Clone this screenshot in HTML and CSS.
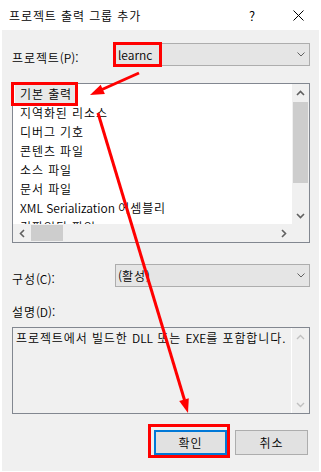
FILE: index.html
```html
<!DOCTYPE html>
<html lang="ko">
<head>
<meta charset="utf-8">
<title>프로젝트 출력 그룹 추가</title>
<link rel="stylesheet" href="styles.css">
</head>
<body>
<div class="window">
  <div class="titlebar">
    <span class="title">프로젝트 출력 그룹 추가</span>
    <span class="cap-btn lat">?</span>
    <span class="cap-btn"><svg width="11" height="11" viewBox="0 0 11 11"><path d="M0.5 0.5 L10.5 10.5 M10.5 0.5 L0.5 10.5" stroke="#000" stroke-width="1" fill="none"/></svg></span>
  </div>
  <div class="client">
    <div class="field-row">
      <span class="field-label">프로젝트<span class="lat">(P):</span></span>
      <div class="combo">
        <span class="combo-text lat">learnc</span>
        <svg class="chev" width="8" height="5" viewBox="0 0 8 5"><path d="M0.5 0.5 L4 4 L7.5 0.5" stroke="#606060" fill="none"/></svg>
      </div>
    </div>

    <div class="listbox">
      <div class="list-main">
        <div class="items">
          <div class="item selected">기본 출력</div>
          <div class="item">지역화된 리소스</div>
          <div class="item">디버그 기호</div>
          <div class="item">콘텐츠 파일</div>
          <div class="item">소스 파일</div>
          <div class="item">문서 파일</div>
          <div class="item"><span class="lat">XML Serialization </span>어셈블리</div>
          <div class="item">컴파일된 파일</div>
        </div>
        <div class="vscroll">
          <div class="sb-btn"><svg width="9" height="6" viewBox="0 0 9 6"><path d="M1 5 L4.5 1.5 L8 5" stroke="#606060" stroke-width="1.6" fill="none"/></svg></div>
          <div class="thumb-v"></div>
          <div class="sb-fill"></div>
          <div class="sb-btn"><svg width="9" height="6" viewBox="0 0 9 6"><path d="M1 1 L4.5 4.5 L8 1" stroke="#606060" stroke-width="1.6" fill="none"/></svg></div>
        </div>
      </div>
      <div class="hscroll">
        <div class="sb-btn-h"><svg width="6" height="9" viewBox="0 0 6 9"><path d="M5 1 L1.5 4.5 L5 8" stroke="#606060" stroke-width="1.6" fill="none"/></svg></div>
        <div class="thumb-h"></div>
        <div class="sb-fill"></div>
        <div class="sb-btn-h"><svg width="6" height="9" viewBox="0 0 6 9"><path d="M1 1 L4.5 4.5 L1 8" stroke="#606060" stroke-width="1.6" fill="none"/></svg></div>
        <div class="corner"></div>
      </div>
    </div>

    <div class="field-row row-config">
      <span class="field-label">구성<span class="lat">(C):</span></span>
      <div class="combo">
        <span class="combo-text"><span class="lat">(</span>활성<span class="lat">)</span></span>
        <svg class="chev" width="8" height="5" viewBox="0 0 8 5"><path d="M0.5 0.5 L4 4 L7.5 0.5" stroke="#606060" fill="none"/></svg>
      </div>
    </div>

    <div class="desc-label">설명<span class="lat">(D):</span></div>
    <div class="desc">
      <div class="desc-text">프로젝트에서 빌드한 <span class="lat">DLL</span> 또는 <span class="lat">EXE</span>를 포함합니다.</div>
      <div class="desc-scroll">
        <div class="sb-btn"><svg width="9" height="6" viewBox="0 0 9 6"><path d="M1 5 L4.5 1.5 L8 5" stroke="#c0c0c0" stroke-width="1.4" fill="none"/></svg></div>
        <div class="sb-fill"></div>
        <div class="sb-btn"><svg width="9" height="6" viewBox="0 0 9 6"><path d="M1 1 L4.5 4.5 L8 1" stroke="#c0c0c0" stroke-width="1.4" fill="none"/></svg></div>
      </div>
    </div>

    <div class="buttons">
      <div class="btn default">확인</div>
      <div class="btn">취소</div>
    </div>
  </div>

  <svg class="annotations" width="321" height="472" viewBox="0 0 321 472">
    <g fill="none" stroke="#ff0000" stroke-width="3">
      <rect x="114.5" y="43.5" width="46" height="22"/>
      <rect x="12.5" y="83.5" width="64" height="21"/>
      <rect x="149.5" y="425.5" width="79" height="31"/>
      <line x1="139" y1="73" x2="102" y2="89.5"/>
      <line x1="98" y1="113" x2="184.5" y2="400"/>
    </g>
    <g fill="#ff0000">
      <polygon points="90,95 100.7,84.7 104.9,93.9"/>
      <polygon points="188,413 179.2,401 188.8,398.2"/>
    </g>
  </svg>
</div>
</body>
</html>
```

FILE: styles.css
```css
* {
  box-sizing: border-box;
}

body {
  margin: 0;
  background: #ffffff;
  font-family: "Noto Sans CJK KR", "Noto Sans", sans-serif;
  font-size: 12px;
  font-weight: 350;
  letter-spacing: 0.9px;
  color: #000000;
}

.lat {
  letter-spacing: 0;
}

.window {
  position: relative;
  width: 321px;
  height: 472px;
  background: #ffffff;
  display: flex;
  flex-direction: column;
  overflow: hidden;
}

.titlebar {
  flex: none;
  height: 30px;
  display: flex;
  align-items: center;
  padding-left: 9px;
}

.title {
  flex: 1;
  line-height: 17px;
}

.cap-btn {
  width: 46px;
  height: 30px;
  display: flex;
  align-items: center;
  justify-content: center;
  font-size: 13px;
}

.client {
  flex: 1;
  margin: 0 2px 1px 2px;
  background: #f0f0f0;
  padding: 13px 9px 0 10px;
  display: flex;
  flex-direction: column;
}

.field-row {
  display: flex;
  height: 23px;
  flex: none;
}

.row-config {
  margin-top: 21px;
}

.field-label {
  width: 103px;
  padding-top: 6px;
  line-height: 17px;
  white-space: nowrap;
}

.combo {
  flex: 1;
  display: flex;
  align-items: center;
  border: 1px solid #adadad;
  background: #e5e5e5;
  padding: 0 4px 0 2px;
}

.combo-text {
  flex: 1;
  line-height: 17px;
}

.chev {
  display: block;
}

.listbox {
  margin-top: 17px;
  height: 160px;
  flex: none;
  border: 1px solid #828790;
  background: #ffffff;
  display: flex;
  flex-direction: column;
}

.list-main {
  display: flex;
  height: 140px;
}

.items {
  flex: 1;
  overflow: hidden;
  padding-left: 2px;
}

.item {
  height: 19px;
  line-height: 19px;
  padding: 0 5px;
  white-space: nowrap;
}

.item.selected {
  width: fit-content;
  padding-right: 3px;
  background: #e8e8e8;
}

.vscroll {
  width: 17px;
  background: #f0f0f0;
  display: flex;
  flex-direction: column;
}

.sb-btn {
  height: 17px;
  flex: none;
  display: flex;
  align-items: center;
  justify-content: center;
}

.sb-fill {
  flex: 1;
}

.thumb-v {
  flex: none;
  height: 81px;
  margin: 1px 1px 0 1px;
  background: #cdcdcd;
}

.hscroll {
  flex: 1;
  display: flex;
  background: #f0f0f0;
}

.sb-btn-h {
  width: 17px;
  flex: none;
  display: flex;
  align-items: center;
  justify-content: center;
}

.thumb-h {
  width: 32px;
  margin: 1px 0 1px 1px;
  background: #cdcdcd;
}

.corner {
  width: 17px;
  background: #f0f0f0;
}

.desc-label {
  margin-top: 16px;
  line-height: 17px;
}

.desc {
  margin-top: 7px;
  height: 87px;
  flex: none;
  border: 1px solid #828790;
  background: #f0f0f0;
  display: flex;
}

.desc-text {
  flex: 1;
  padding: 1px 0 0 3px;
  line-height: 17px;
  white-space: nowrap;
  overflow: hidden;
}

.desc-scroll {
  width: 18px;
  border-left: 1px solid #ffffff;
  display: flex;
  flex-direction: column;
}

.buttons {
  margin-top: 16px;
  display: flex;
  justify-content: flex-end;
  gap: 8px;
  padding-right: 2px;
}

.btn {
  width: 73px;
  height: 25px;
  border: 1px solid #adadad;
  background: #e1e1e1;
  display: flex;
  align-items: center;
  justify-content: center;
  line-height: 17px;
}

.btn.default {
  border: 2px solid #0078d7;
}

.annotations {
  position: absolute;
  left: 0;
  top: 0;
  pointer-events: none;
}
```
